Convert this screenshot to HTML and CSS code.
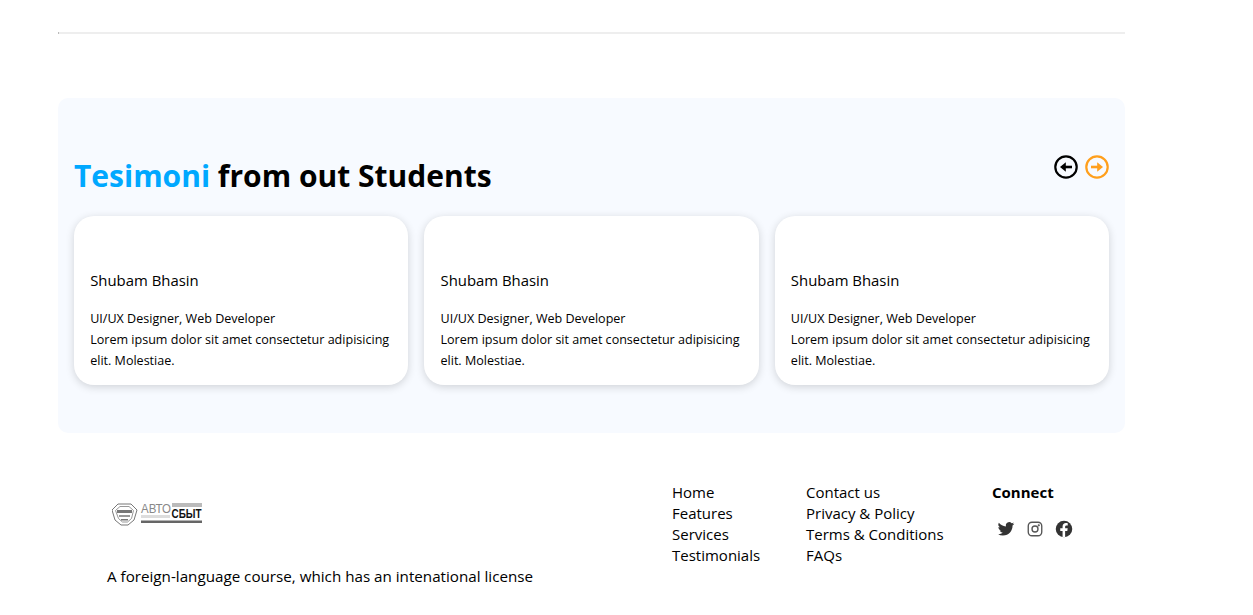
FILE: index.html
```html
<!DOCTYPE html>
<html lang="en">
<head>
<meta charset="utf-8">
<title>Testimonials</title>
<link rel="stylesheet" href="styles.css">
</head>
<body>
<div class="page">
  <hr class="rule">
  <section class="testimonials">
    <div class="head">
      <h2 class="title"><span class="accent">Tesimoni</span> from out Students</h2>
      <div class="arrows">
        <svg class="arrow" viewBox="0 0 24 24" fill="none" stroke="#000" stroke-width="2.2"><circle cx="12" cy="12" r="10.7"/><path d="M18 12H9" stroke-width="2.600"/><path d="M11.800 7.200 6 12l5.800 4.800z" fill="#000" stroke="none"/></svg>
        <svg class="arrow" viewBox="0 0 24 24" fill="none" stroke="#ff9f1c" stroke-width="2.2"><circle cx="12" cy="12" r="10.7"/><path d="M6 12h9" stroke-width="2.600"/><path d="M12.200 7.200 18 12l-5.800 4.800z" fill="#ff9f1c" stroke="none"/></svg>
      </div>
    </div>
    <div class="cards">
      <article class="card">
        <h3 class="name">Shubam Bhasin</h3>
        <p class="text">UI/UX Designer, Web Developer<br>Lorem ipsum dolor sit amet consectetur adipisicing elit. Molestiae.</p>
      </article>
      <article class="card">
        <h3 class="name">Shubam Bhasin</h3>
        <p class="text">UI/UX Designer, Web Developer<br>Lorem ipsum dolor sit amet consectetur adipisicing elit. Molestiae.</p>
      </article>
      <article class="card">
        <h3 class="name">Shubam Bhasin</h3>
        <p class="text">UI/UX Designer, Web Developer<br>Lorem ipsum dolor sit amet consectetur adipisicing elit. Molestiae.</p>
      </article>
    </div>
  </section>
  <footer class="footer">
    <div class="brand">
      <svg class="logo" viewBox="0 0 104 26" width="104" height="26">
        <path d="M0 9 6 3h13l6 6-3 10-6 5h-7l-6-5z" fill="#fff" stroke="#777" stroke-width="1"/>
        <path d="M3.500 9.500 8 5.500h9l4.500 4-2 8-4 3.500h-5l-4-3.500z" fill="#fff" stroke="#999"/>
        <rect x="5" y="9" width="15" height="3" fill="#777"/>
        <rect x="7" y="14" width="11" height="2" fill="#999"/>
        <rect x="9" y="18" width="7" height="1.500" fill="#777"/>
        <text x="29" y="12" class="logo-a" textLength="30" lengthAdjust="spacingAndGlyphs">АВТО</text>
        <rect x="60" y="2" width="30" height="4" fill="#bbb"/>
        <rect x="29" y="14" width="29" height="3" fill="#ddd"/>
        <text x="59.500" y="17" class="logo-b" textLength="30" lengthAdjust="spacingAndGlyphs">СБЫТ</text>
        <rect x="29" y="19.500" width="61" height="2.500" fill="#666"/>
      </svg>
      <p class="tagline">A foreign-language course, which has an intenational license</p>
    </div>
    <ul class="links links-a">
      <li>Home</li>
      <li>Features</li>
      <li>Services</li>
      <li>Testimonials</li>
    </ul>
    <ul class="links links-b">
      <li>Contact us</li>
      <li>Privacy &amp; Policy</li>
      <li>Terms &amp; Conditions</li>
      <li>FAQs</li>
    </ul>
    <div class="connect">
      <h4 class="connect-title">Connect</h4>
      <div class="social">
        <svg viewBox="0 0 24 24" width="18" height="18" fill="#333"><path d="M23 5.100a9 9 0 0 1-2.600.7 4.500 4.500 0 0 0 2-2.500 9 9 0 0 1-2.900 1.100 4.500 4.500 0 0 0-7.700 4.100A12.800 12.800 0 0 1 2.500 3.800a4.500 4.500 0 0 0 1.400 6 4.500 4.500 0 0 1-2-.6v.1a4.500 4.500 0 0 0 3.600 4.400 4.500 4.500 0 0 1-2 .1 4.500 4.500 0 0 0 4.200 3.100A9 9 0 0 1 1 18.800a12.800 12.800 0 0 0 6.900 2c8.300 0 12.800-6.900 12.800-12.800v-.6A9 9 0 0 0 23 5.100z"/></svg>
        <svg viewBox="0 0 24 24" width="18" height="18" fill="none" stroke="#555" stroke-width="1.800"><rect x="3" y="3" width="18" height="18" rx="5"/><circle cx="12" cy="12" r="4"/><circle cx="17" cy="7" r=".6" fill="#555"/></svg>
        <svg viewBox="0 0 24 24" width="18" height="18"><circle cx="12" cy="12" r="11" fill="#333"/><path d="M13.500 23v-8.500h2.900l.5-3.400h-3.400V9c0-1 .5-1.800 1.900-1.800H17V4.300c-.6-.1-1.500-.2-2.400-.2-2.700 0-4.500 1.600-4.500 4.600v2.400H7v3.400h3.100V23z" fill="#fff"/></svg>
      </div>
    </div>
  </footer>
</div>
</body>
</html>
```
FILE: styles.css
```css
* { box-sizing: border-box; }
html, body { margin: 0; padding: 0; background: #fff; }
body { font-family: "Open Sans", "Noto Sans", sans-serif; color: #000; overflow: hidden; }
.page { width: 1067px; margin-left: 58px; padding-top: 32px; }
.rule { margin: 0 0 64px; height: 2px; border: 0; border-left: 1px solid #bbb; background: #eee; }
.testimonials { height: 335px; background: #f7faff; border-radius: 10px; padding: 60px 16px 0; }
.head { display: flex; justify-content: space-between; align-items: flex-start; height: 58px; }
.title { margin: 0; font-size: 30px; line-height: 35px; font-weight: 700; }
.accent { color: #00a8ff; }
.arrows { display: flex; gap: 7px; margin-top: -3px; }
.arrow { width: 24px; height: 24px; display: block; }
.cards { display: grid; grid-template-columns: repeat(3, 1fr); gap: 16px; }
.card { height: 169px; background: #fff; border-radius: 20px; padding: 54px 16.200px 0; box-shadow: 0 2px 8px rgba(0,0,0,.16); }
.name { margin: 0 0 18px; font-size: 14.900px; line-height: 20px; font-weight: 400; }
.text { margin: 0; font-size: 12.550px; line-height: 21px; }
.footer { display: flex; padding-top: 49px; font-size: 15px; line-height: 21px; }
.brand { width: 614px; padding-left: 49px; }
.logo { display: block; margin: 19px 0 0 5px; }
.logo-a { font: 13px "Liberation Sans", sans-serif; fill: #888; }
.logo-b { font: bold 13px "Liberation Sans", sans-serif; fill: #111; }
.tagline { margin: 39px 0 0; font-size: 15.200px; }
.links { list-style: none; margin: 0; padding: 0; }
.links-a { width: 134px; }
.links-b { width: 186px; }
.connect-title { margin: 0 0 17px; font-size: 15px; line-height: 21px; font-weight: 700; }
.social { display: flex; gap: 11px; padding-left: 5px; }
```
